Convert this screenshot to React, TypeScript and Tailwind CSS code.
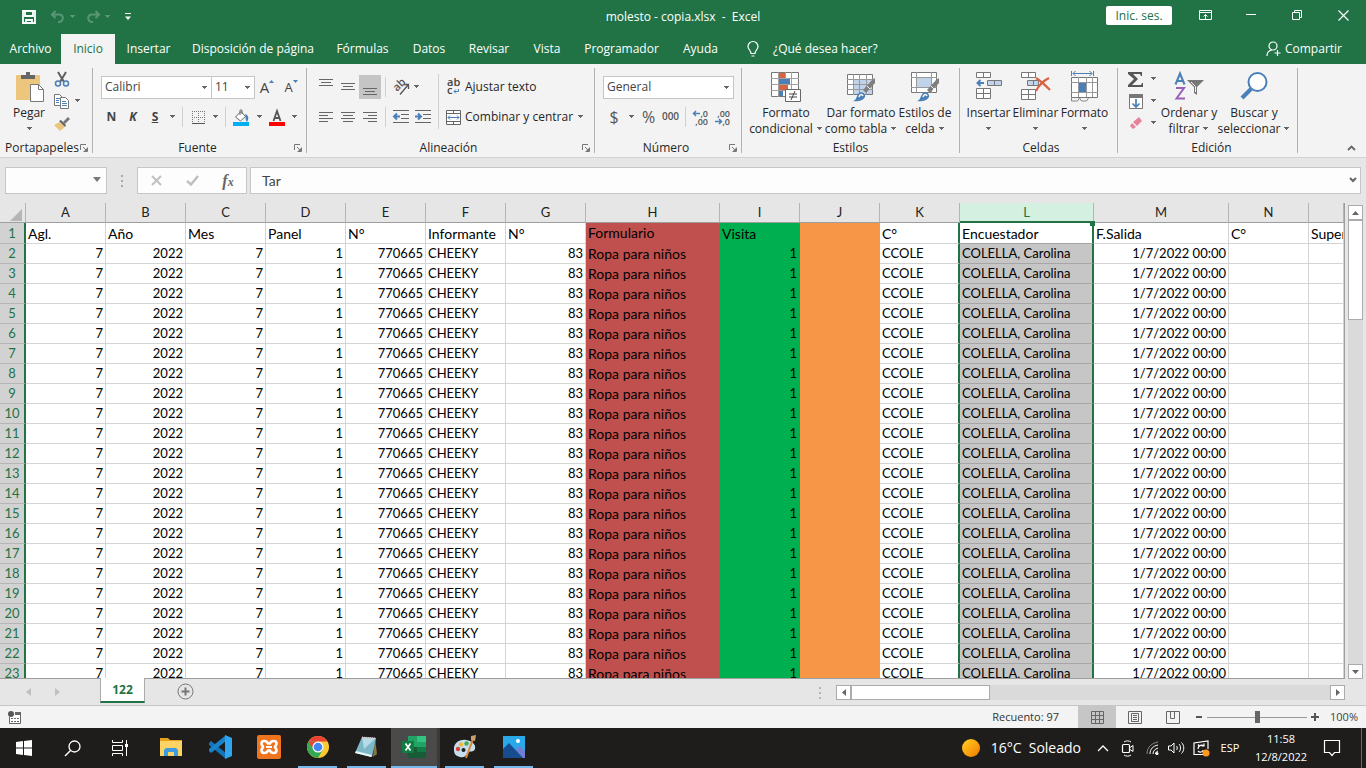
import React from 'react';

interface ChildrenProps {
  children: React.ReactNode;
}

interface DrawingProps extends ChildrenProps {
  w: number;
  h: number;
}

// One viewBox unit is one pixel, so the strokes stay crisp
const Drawing: React.FC<DrawingProps> = ({ w, h, children }) => (
  <svg width={w} height={h} viewBox={`0 0 ${w} ${h}`} fill="none" className="block shrink-0 overflow-visible" aria-hidden="true">
    {children}
  </svg>
);

const Caret: React.FC<{ color?: string }> = ({ color = '#666666' }) => (
  <Drawing w={7} h={4}>
    <path d="M1 0h5v1h-1v1h-1v1h-1v-1h-1v-1h-1z" fill={color} />
  </Drawing>
);

interface ToolProps {
  label: string;
  className: string;
  small?: boolean;
}

const CaretButton: React.FC<ToolProps> = ({ label, className, small }) => (
  <button type="button" aria-label={label} className={`flex items-center justify-center ${small ? 'h-[22px]' : 'h-6'} ${className}`}>
    <Caret />
  </button>
);

const ToolButton: React.FC<ToolProps & ChildrenProps> = ({ label, className, small, children }) => (
  <button
    type="button"
    aria-label={label}
    title={label}
    className={`flex shrink-0 items-center justify-center ${small ? 'h-[22px]' : 'h-6'} ${className}`}
  >
    {children}
  </button>
);

const Divider: React.FC<{ className?: string }> = ({ className = 'mx-1 h-5' }) => (
  <div className={`w-px shrink-0 bg-[#d0d0d0] ${className}`} />
);

const RibbonGroup: React.FC<{ title: string; className: string; launcher?: boolean } & ChildrenProps> = ({
  title,
  className,
  launcher,
  children,
}) => (
  <section aria-label={title} className={`mt-1 flex h-[85px] shrink-0 flex-col border-r border-[#b1b1b1] ${className}`}>
    <div className="flex h-[74px] shrink-0">{children}</div>
    <div className="flex h-3 items-center">
      <span className="flex-1 text-center">{title}</span>
      {launcher && (
        <button type="button" aria-label={`Más opciones de ${title}`} className="mr-1">
          <Drawing w={8} h={8}>
            <path d="M0.5 6V0.5H6M3 3l3 3M7.5 3.500v4h-4" stroke="#777777" />
            <path d="M7 4v3h-3z" fill="#777777" />
          </Drawing>
        </button>
      )}
    </div>
  </section>
);

interface BigButtonProps {
  icon: React.ReactNode;
  lines: [string, string?];
  className: string;
}

const BigButton: React.FC<BigButtonProps> = ({ icon, lines, className }) => (
  <button type="button" className={`flex shrink-0 flex-col items-center pt-1 leading-4 whitespace-nowrap ${className}`}>
    <span className="flex h-[33px] items-start">{icon}</span>
    <span>{lines[0]}</span>
    <span className="flex h-4 items-center gap-[3px]">
      {lines[1]}
      <Caret />
    </span>
  </button>
);

interface ComboProps {
  label: string;
  value: string;
  className: string;
}

const Combo: React.FC<ComboProps> = ({ label, value, className }) => (
  <div className={`relative ${className}`}>
    <select
      aria-label={label}
      defaultValue={value}
      className="block h-[23px] w-full appearance-none border border-[#c6c6c6] bg-white px-[3px] text-[#444444] outline-none"
    >
      <option>{value}</option>
    </select>
    <span className="pointer-events-none absolute top-[10px] right-1">
      <Caret />
    </span>
  </div>
);

// Horizontal strokes of the alignment buttons: [x, y, width]
const LineIcon: React.FC<{ lines: number[][]; h?: number }> = ({ lines, h = 16 }) => (
  <Drawing w={16} h={h}>
    {lines.map(([x, y, width]) => (
      <rect key={y} x={x} y={y} width={width} height={1} fill="#666666" />
    ))}
  </Drawing>
);

const Brush: React.FC = () => (
  <>
    <path d="M28 6v5l-9 10-3-3 9-10z" fill="#7f7f7f" />
    <path d="M20 14l3 3" stroke="#f3f3f3" />
    <path d="M6 29c4-1 3-5 6-8 3-2 7 1 6 4-2 4-8 5-12 4z" fill="#4a7fb8" />
    <path d="M12 25c1-3 3-3 4-1" stroke="#ffffff" strokeWidth="1.500" />
  </>
);

const ClipboardSection: React.FC = () => (
  <RibbonGroup title="Portapapeles" className="w-[93px] pl-1" launcher>
    <BigButton
      className="w-[50px]"
      lines={['Pegar']}
      icon={
        <Drawing w={29} h={31}>
          <rect x="1" y="3" width="24" height="25" rx="1" fill="#ecc67c" />
          <path d="M6 7V3h5V0h4v3h5v4z" fill="#666666" />
          <path d="M15.500 12.500h8l5 5v12h-13z" fill="#ffffff" stroke="#777777" />
          <path d="M23.500 12.500v5h5" stroke="#777777" />
        </Drawing>
      }
    />
    <div className="flex flex-col">
      <ToolButton label="Cortar" className="w-4" small>
        <Drawing w={16} h={16}>
          <path d="M4 1l6 10M12 1L6 11" stroke="#5f5f5f" strokeWidth="2" />
          <circle cx="4" cy="12.500" r="2.500" stroke="#4a7fb8" strokeWidth="1.500" />
          <circle cx="12" cy="12.500" r="2.500" stroke="#4a7fb8" strokeWidth="1.500" />
        </Drawing>
      </ToolButton>
      <div className="flex">
        <ToolButton label="Copiar" className="w-4" small>
          <Drawing w={16} h={15}>
            <path d="M.5.5h5l3 3v8h-8z" fill="#ffffff" stroke="#777777" />
            <path d="M2 4.500h4M2 6.500h3M2 8.500h3" stroke="#4a7fb8" />
            <path d="M6.500 3.500h5l3 3v8h-8z" fill="#ffffff" stroke="#777777" />
            <path d="M8 7.500h4M8 9.500h5M8 11.500h5" stroke="#4a7fb8" />
          </Drawing>
        </ToolButton>
        <CaretButton label="Opciones de copiar" className="w-[14px]" small />
      </div>
      <ToolButton label="Copiar formato" className="w-4" small>
        <Drawing w={16} h={15}>
          <path d="M0 9l6-3 5 5-5 4z" fill="#ecc67c" />
          <path d="M5 5l2-1 5 5-1 2z" fill="#666666" />
          <path d="M9 6l5-5 2 2-5 5z" fill="#777777" />
        </Drawing>
      </ToolButton>
    </div>
  </RibbonGroup>
);

const FontSection: React.FC = () => (
  <RibbonGroup title="Fuente" className="w-[214px] pl-2" launcher>
    <div className="pt-[7px]">
      <div className="flex h-6 items-center">
        <Combo label="Fuente" value="Calibri" className="w-[111px]" />
        <Combo label="Tamaño de fuente" value="11" className="-ml-px w-11" />
        <ToolButton label="Aumentar tamaño" className="w-6">
          <span className="text-[15px] leading-5 text-[#444444]">A</span>
          <span className="-mt-3"><Drawing w={5} h={3}><path d="M0 3l2.500-3 2.500 3z" fill="#4a7fb8" /></Drawing></span>
        </ToolButton>
        <ToolButton label="Disminuir tamaño" className="w-6">
          <span className="text-[13px] leading-5 text-[#444444]">A</span>
          <span className="-mt-3"><Drawing w={5} h={3}><path d="M0 0l2.500 3 2.500-3z" fill="#4a7fb8" /></Drawing></span>
        </ToolButton>
      </div>
      <div className="mt-[6px] flex items-center text-[#444444]">
        <ToolButton label="Negrita" className="w-[21px]"><b>N</b></ToolButton>
        <ToolButton label="Cursiva" className="w-[22px]"><b className="italic">K</b></ToolButton>
        <ToolButton label="Subrayado" className="w-[22px]"><b className="underline">S</b></ToolButton>
        <CaretButton label="Opciones de subrayado" className="w-3" />
        <Divider />
        <ToolButton label="Bordes" className="w-[22px]">
          <Drawing w={13} h={13}>
            <path d="M.5 0v12M6.500 0v12M12.500 0v12M0 .5h13M0 6.500h13" stroke="#777777" strokeDasharray="1 1" />
            <path d="M0 12.500h13" stroke="#555555" />
          </Drawing>
        </ToolButton>
        <CaretButton label="Opciones de bordes" className="w-3" />
        <Divider />
        <ToolButton label="Color de relleno" className="w-[23px]">
          <Drawing w={17} h={17}>
            <path d="M2.500 8L8 2.500l4.500 5L7.500 12z" fill="#ffffff" stroke="#666666" />
            <path d="M7 6V1.500c0-1 2-1 2 0V5" stroke="#666666" />
            <path d="M12 5c4 1 4 5 2 8-2-2-1-5-2-8z" fill="#4a7fb8" />
            <rect y="13" width="16" height="4" fill="#00b0f0" />
          </Drawing>
        </ToolButton>
        <CaretButton label="Opciones de relleno" className="w-3" />
        <ToolButton label="Color de fuente" className="w-[23px]">
          <Drawing w={16} h={17}>
            <path d="M4.500 12L8 2l3.500 10M6 9h4.500" stroke="#555555" strokeWidth="1.800" />
            <rect y="13" width="16" height="4" fill="#ff0000" />
          </Drawing>
        </ToolButton>
        <CaretButton label="Opciones de color" className="w-3" />
      </div>
    </div>
  </RibbonGroup>
);

const IndentArrow: React.FC<{ right?: boolean }> = ({ right }) => (
  <Drawing w={16} h={14}>
    <path d="M0 .5h16M8 4.500h8M8 8.500h8M0 12.500h16" stroke="#666666" />
    <path d={right ? 'M0 6.500h5M3 3.500l3 3-3 3' : 'M7 6.500H2M4 3.500l-3 3 3 3'} stroke="#4a7fb8" strokeWidth="2" />
  </Drawing>
);

const AlignmentSection: React.FC = () => (
  <RibbonGroup title="Alineación" className="w-[288px] pl-2" launcher>
    <div className="pt-[7px]">
      <div className="flex h-6 items-center">
        <ToolButton label="Alinear en la parte superior" className="w-[22px]">
          <LineIcon lines={[[1, 0, 14], [3, 3, 10], [1, 6, 14]]} />
        </ToolButton>
        <ToolButton label="Alinear en el medio" className="w-[22px]">
          <LineIcon lines={[[1, 4, 14], [3, 7, 10], [1, 10, 14]]} />
        </ToolButton>
        <ToolButton label="Alinear en la parte inferior" className="w-[22px] bg-[#c5c5c5]">
          <LineIcon lines={[[1, 9, 14], [3, 12, 10], [1, 15, 14]]} />
        </ToolButton>
        <Divider />
        <ToolButton label="Orientación" className="w-[22px]">
          <Drawing w={17} h={17}>
            <text x="1" y="10" fontSize="11" fontWeight="600" fill="#555555" transform="rotate(-45 6 8)">ab</text>
            <path d="M7 15.500L15 6M11 5.500h4.500V10" stroke="#555555" strokeWidth="1.300" />
          </Drawing>
        </ToolButton>
        <CaretButton label="Opciones de orientación" className="w-2" />
      </div>
      <div className="mt-[6px] flex items-center">
        <ToolButton label="Alinear a la izquierda" className="w-[22px]">
          <LineIcon lines={[[1, 3, 14], [1, 6, 9], [1, 9, 14], [1, 12, 9]]} />
        </ToolButton>
        <ToolButton label="Centrar" className="w-[22px]">
          <LineIcon lines={[[1, 3, 14], [3, 6, 10], [1, 9, 14], [3, 12, 10]]} />
        </ToolButton>
        <ToolButton label="Alinear a la derecha" className="w-[22px]">
          <LineIcon lines={[[1, 3, 14], [6, 6, 9], [1, 9, 14], [6, 12, 9]]} />
        </ToolButton>
        <Divider />
        <ToolButton label="Disminuir sangría" className="w-[22px]"><IndentArrow /></ToolButton>
        <ToolButton label="Aumentar sangría" className="w-[22px]"><IndentArrow right /></ToolButton>
      </div>
    </div>
    <Divider className="mt-[6px] ml-1 h-[55px]" />
    <div className="pt-[7px] pl-[7px]">
      <button type="button" className="flex h-6 items-center gap-1 whitespace-nowrap">
        <Drawing w={15} h={16}>
          <text x="1" y="7" fontSize="11" fontWeight="600" fill="#444444">ab</text>
          <text x="1" y="15" fontSize="11" fontWeight="600" fill="#444444">c</text>
          <path d="M12.500 10v2.500H8M10 10.500l-2 2 2 2" stroke="#4a7fb8" />
        </Drawing>
        Ajustar texto
      </button>
      <div className="mt-[6px] flex">
        <button type="button" className="flex h-6 w-[126px] items-center gap-1 whitespace-nowrap">
          <Drawing w={15} h={15}>
            <path d="M.5.5h14v14H.5zM.5 3.500h14M.5 11.500h14M7.500 0v3M7.500 12v3" fill="#ffffff" stroke="#666666" />
            <path d="M2 7.500h11M4 5.500l-2 2 2 2M11 5.500l2 2-2 2" stroke="#4a7fb8" />
          </Drawing>
          Combinar y centrar
        </button>
        <CaretButton label="Opciones de combinar" className="w-4" />
      </div>
    </div>
  </RibbonGroup>
);

const DecimalIcon: React.FC<{ less?: boolean }> = ({ less }) => (
  <Drawing w={16} h={15}>
    <text x="15" y="7" fontSize="9" fontWeight="600" textAnchor="end" fill="#555555">{less ? ',00' : ',0'}</text>
    <text x="15" y="15" fontSize="9" fontWeight="600" textAnchor="end" fill="#555555">{less ? ',0' : ',00'}</text>
    <path
      d={less ? 'M0 11.500h6M4 9l2.500 2.500L4 14' : 'M7 3.500H1M3 1L.5 3.500 3 6'}
      stroke="#4a7fb8"
      strokeWidth="1.500"
    />
  </Drawing>
);

const NumberSection: React.FC = () => (
  <RibbonGroup title="Número" className="w-[147px] pl-2" launcher>
    <div className="pt-[7px]">
      <div className="flex h-6 items-center">
        <Combo label="Formato de número" value="General" className="w-[131px]" />
      </div>
      <div className="mt-[6px] flex items-center text-[#555555]">
        <ToolButton label="Formato de moneda" className="w-[22px]"><span className="text-base">$</span></ToolButton>
        <CaretButton label="Opciones de moneda" className="w-3" />
        <ToolButton label="Porcentaje" className="w-[23px]"><span className="text-base">%</span></ToolButton>
        <ToolButton label="Estilo millares" className="w-[21px]"><span className="text-[10px] font-semibold">000</span></ToolButton>
        <Divider />
        <ToolButton label="Aumentar decimales" className="w-[22px]"><DecimalIcon /></ToolButton>
        <ToolButton label="Disminuir decimales" className="w-[22px]"><DecimalIcon less /></ToolButton>
      </div>
    </div>
  </RibbonGroup>
);

const StylesSection: React.FC = () => (
  <RibbonGroup title="Estilos" className="w-[218px]">
    <BigButton
      className="w-[88px]"
      lines={['Formato', 'condicional']}
      icon={
        <Drawing w={30} h={30}>
          <path d="M.5.5h27v24H.5z" fill="#ffffff" stroke="#777777" />
          <path d="M7.500 0v25M14.500 0v25M20.500 0v25M0 6.500h28M0 12.500h28M0 18.500h28" stroke="#a0a0a0" />
          <path d="M8 1h6v5H8zM8 13h9v5H8z" fill="#d8633f" />
          <path d="M8 7h11v5H8zM8 19h4v5H8z" fill="#4a7fb8" />
          <path d="M14.500 17.500h15v12h-15z" fill="#ffffff" stroke="#666666" />
          <path d="M18 22h8M18 25h8M24 19l-4 9" stroke="#444444" />
        </Drawing>
      }
    />
    <BigButton
      className="w-[62px]"
      lines={['Dar formato', 'como tabla']}
      icon={
        <Drawing w={29} h={31}>
          <path d="M.5 2.500h25v20H.5z" fill="#ffffff" stroke="#777777" />
          <path d="M7 8h18v14H7z" fill="#c0d3e8" />
          <path d="M6.500 2v21M12.500 2v21M19.500 2v21M0 7.500h26M0 12.500h26M0 17.500h26" stroke="#999999" />
          <Brush />
        </Drawing>
      }
    />
    <BigButton
      className="w-[66px]"
      lines={['Estilos de', 'celda']}
      icon={
        <Drawing w={29} h={31}>
          <path d="M.5.5h25v20H.5z" fill="#ffffff" stroke="#777777" />
          <path d="M6 6h14v9H6z" fill="#c0d3e8" />
          <path d="M5.500 0v21M20.500 0v21M0 5.500h26M0 15.500h26" stroke="#999999" />
          <Brush />
        </Drawing>
      }
    />
  </RibbonGroup>
);

const CellsSection: React.FC = () => (
  <RibbonGroup title="Celdas" className="w-[158px] pl-[5px]">
    <BigButton
      className="w-[47px]"
      lines={['Insertar']}
      icon={
        <Drawing w={26} h={28}>
          <path d="M.5.5h14v5H.5zM7.500 0v5M.5 16.500h14v10H.5zM7.500 17v10M0 21.500h15" fill="#ffffff" stroke="#777777" />
          <path d="M11.500 8.500h14v5h-14zM18.500 9v5" fill="#c0d3e8" stroke="#777777" />
          <path d="M8 11H2M4.500 8l-3 3 3 3" stroke="#4a7fb8" strokeWidth="2" />
        </Drawing>
      }
    />
    <BigButton
      className="w-[47px]"
      lines={['Eliminar']}
      icon={
        <Drawing w={30} h={29}>
          <path d="M.5.5h14v5H.5zM7.500 0v5M.5 17.500h14v10H.5zM7.500 18v10M0 22.500h15" fill="#ffffff" stroke="#777777" />
          <path d="M6.500 8.500h11v5h-11zM12.500 9v5" fill="#c0d3e8" stroke="#777777" />
          <path d="M15 6c5 3 9 7 14 12M28 6c-6 3-10 7-13 13" stroke="#d8633f" strokeWidth="2.200" />
        </Drawing>
      }
    />
    <BigButton
      className="w-[51px]"
      lines={['Formato']}
      icon={
        <Drawing w={29} h={31}>
          <path d="M1.500-1v5M23.500-1v5M3 1.500h19M5.500-1L3 1.500 5.500 4M19.500-1L22 1.500 19.500 4" stroke="#4a7fb8" />
          <path d="M1.500 5.500h26v20h-26z" fill="#ffffff" stroke="#777777" />
          <path d="M8.500 5v20M16.500 5v20M22.500 5v20M1 10.500h27M1 20.500h27" stroke="#999999" />
          <path d="M9 11h7v9H9z" fill="#4a7fb8" />
          <path d="M1.500 25v4h6l2-3 2 3h5l2-3" stroke="#888888" />
        </Drawing>
      }
    />
  </RibbonGroup>
);

const EditingSection: React.FC = () => (
  <RibbonGroup title="Edición" className="w-[180px] pl-2">
    <div className="flex w-8 flex-col">
      <div className="flex">
        <ToolButton label="Autosuma" className="w-5" small>
          <Drawing w={16} h={15}>
            <path d="M0 0h14v4h-1l-1-2H5l5 5-6 6h9l1-2h1v4H0v-2l6-6-6-5z" fill="#555555" />
          </Drawing>
        </ToolButton>
        <CaretButton label="Opciones de autosuma" className="ml-[2px] w-[10px]" small />
      </div>
      <div className="flex">
        <ToolButton label="Rellenar" className="w-5" small>
          <Drawing w={14} h={15}>
            <path d="M.5.5h13v14H.5z" fill="#ffffff" stroke="#777777" />
            <path d="M0 0h14v4H0z" fill="#777777" />
            <path d="M7 5v8M3.500 9.500L7 13l3.500-3.500" stroke="#4a7fb8" strokeWidth="1.700" />
          </Drawing>
        </ToolButton>
        <CaretButton label="Opciones de rellenar" className="ml-[2px] w-[10px]" small />
      </div>
      <div className="flex">
        <ToolButton label="Borrar" className="w-5" small>
          <Drawing w={14} h={14}>
            <path d="M4 6l6-5 3 4-5 5z" fill="#e8829a" />
            <path d="M3 7l4 4-3 2-3-3z" fill="#e8829a" />
          </Drawing>
        </ToolButton>
        <CaretButton label="Opciones de borrar" className="ml-[2px] w-[10px]" small />
      </div>
    </div>
    <BigButton
      className="w-[62px]"
      lines={['Ordenar y', 'filtrar']}
      icon={
        <Drawing w={30} h={29}>
          <path d="M1.500 12.500L6 1.500l4.500 11M3 9h6" stroke="#4a7fb8" strokeWidth="2" />
          <path d="M2 16h8L2.500 26.500H11" stroke="#9a5fb8" strokeWidth="2" />
          <path d="M13 8h17l-7 7v8l-3-2v-6z" fill="#777777" />
          <path d="M17 10l4.500 4.500V20" stroke="#f3f3f3" />
        </Drawing>
      }
    />
    <BigButton
      className="w-[68px]"
      lines={['Buscar y', 'seleccionar']}
      icon={
        <Drawing w={28} h={28}>
          <path d="M11 17L2 26" stroke="#4a7fb8" strokeWidth="4" />
          <circle cx="17.500" cy="10" r="9" fill="#ffffff" stroke="#4a7fb8" strokeWidth="2" />
        </Drawing>
      }
    />
  </RibbonGroup>
);

const TitleBar: React.FC = () => (
  <div className="grid h-[34px] grid-cols-[1fr_auto_1fr] items-center">
    <div className="flex items-center pl-[22px]">
      <button type="button" aria-label="Guardar">
        <Drawing w={14} h={14}>
          <path d="M1 1h12v12H1zM3 2v4h8V2M4 13v-3h6v3" stroke="#ffffff" strokeWidth="1.800" />
        </Drawing>
      </button>
      <button type="button" aria-label="Deshacer" className="ml-[14px]">
        <Drawing w={16} h={14}>
          <path d="M5.500 1L2 4.500 5.500 8M2 4.500h7c5 0 5 7 0 7.500H8" stroke="#5a9675" strokeWidth="2" />
        </Drawing>
      </button>
      <span className="ml-[3px]"><Caret color="#5a9675" /></span>
      <button type="button" aria-label="Rehacer" className="ml-[9px]">
        <Drawing w={16} h={14}>
          <path d="M10.500 1L14 4.500 10.500 8M14 4.500H7c-5 0-5 7 0 7.500h1" stroke="#5a9675" strokeWidth="2" />
        </Drawing>
      </button>
      <span className="ml-[3px]"><Caret color="#5a9675" /></span>
      <button type="button" aria-label="Personalizar barra de acceso rápido" className="ml-[13px]">
        <Drawing w={7} h={8}>
          <path d="M1 .5h6" stroke="#ffffff" />
          <path d="M1 3.500h6L4 7z" fill="#ffffff" />
        </Drawing>
      </button>
    </div>
    <h1 className="whitespace-pre">molesto - copia.xlsx  -  Excel</h1>
    <div className="flex h-full items-center justify-end text-white">
      <button type="button" className="-mt-1 mr-[10px] h-[19px] w-[66px] rounded-xs bg-white leading-[19px] text-[#217346]">
        Inic. ses.
      </button>
      <button type="button" aria-label="Opciones de la cinta" className="-mt-1 flex h-[30px] w-[46px] items-center justify-center">
        <Drawing w={13} h={10}>
          <path d="M.5.5h12v9H.5zM.5 2.500h12M6.500 9V4.500M4.500 6.500l2-2 2 2" stroke="#ffffff" />
        </Drawing>
      </button>
      <button type="button" aria-label="Minimizar" className="-mt-1 flex h-[30px] w-[46px] items-center justify-center">
        <Drawing w={10} h={2}><path d="M0 .5h10" stroke="#ffffff" /></Drawing>
      </button>
      <button type="button" aria-label="Restaurar" className="-mt-1 flex h-[30px] w-[46px] items-center justify-center">
        <Drawing w={10} h={10}><path d="M.5 2.500h7v7h-7zM2.500 2V.5h7v7H8" stroke="#ffffff" /></Drawing>
      </button>
      <button type="button" aria-label="Cerrar" className="-mt-1 flex h-[30px] w-[46px] items-center justify-center">
        <Drawing w={11} h={11}><path d="M.5.5l10 10M10.500.5l-10 10" stroke="#ffffff" strokeWidth="1.200" /></Drawing>
      </button>
    </div>
  </div>
);

const ribbonTabs = [
  { name: 'Archivo', width: 'w-[61px]' },
  { name: 'Inicio', width: 'w-[54px]' },
  { name: 'Insertar', width: 'w-[67px]' },
  { name: 'Disposición de página', width: 'w-[142px]' },
  { name: 'Fórmulas', width: 'w-[77px]' },
  { name: 'Datos', width: 'w-[56px]' },
  { name: 'Revisar', width: 'w-[64px]' },
  { name: 'Vista', width: 'w-[52px]' },
  { name: 'Programador', width: 'w-[97px]' },
  { name: 'Ayuda', width: 'w-[61px]' },
];

const TabBar: React.FC = () => (
  <nav className="flex h-[30px] items-center whitespace-nowrap">
    {ribbonTabs.map(({ name, width }) => (
      <button
        key={name}
        type="button"
        className={`h-full shrink-0 ${width} ${name === 'Inicio' ? 'bg-[#f3f3f3] text-[#217346]' : 'text-white'}`}
      >
        {name}
      </button>
    ))}
    <button type="button" className="ml-4 flex items-center gap-[14px]">
      <Drawing w={12} h={16}>
        <path d="M4 12.500c0-3-3-4-3-7a5 5 0 0 1 10 0c0 3-3 4-3 7zM4 12.500h4M4.500 15h3" stroke="#ffffff" strokeWidth="1.200" />
      </Drawing>
      ¿Qué desea hacer?
    </button>
    <button type="button" className="mr-6 ml-auto flex items-center gap-1">
      <Drawing w={15} h={16}>
        <circle cx="7" cy="5" r="4" stroke="#ffffff" strokeWidth="1.200" />
        <path d="M1 15c0-4 2-5.500 5-6M11.500 9v6M8.500 12h6" stroke="#ffffff" strokeWidth="1.200" />
      </Drawing>
      Compartir
    </button>
  </nav>
);

const FormulaBar: React.FC = () => (
  <div className="flex h-[46px] shrink-0 items-start border-t border-[#d2d2d2] px-[5px] pt-[9px]">
    <div className="relative w-[102px] shrink-0">
      <input aria-label="Cuadro de nombres" className="block h-[27px] w-full border border-[#c6c6c6] bg-[#fdfdfd]" />
      <span className="pointer-events-none absolute top-[10px] right-[6px]">
        <Drawing w={8} h={5}><path d="M0 0h8L4 5z" fill="#777777" /></Drawing>
      </span>
    </div>
    <div className="flex h-[27px] w-[30px] shrink-0 items-center justify-center">
      <Drawing w={2} h={12}><path d="M0 0h2v2H0zM0 5h2v2H0zM0 10h2v2H0z" fill="#a8a8a8" /></Drawing>
    </div>
    <div className="flex h-[27px] w-[110px] shrink-0 items-center border border-[#c6c6c6] bg-[#fdfdfd]">
      <button type="button" aria-label="Cancelar" className="flex w-9 justify-center">
        <Drawing w={11} h={11}><path d="M1 1l9 9M10 1l-9 9" stroke="#c0c0c0" strokeWidth="2" /></Drawing>
      </button>
      <button type="button" aria-label="Introducir" className="flex w-9 justify-center">
        <Drawing w={13} h={11}><path d="M1 6l4 3.500L12 1" stroke="#c0c0c0" strokeWidth="2.500" /></Drawing>
      </button>
      <button type="button" aria-label="Insertar función" className="w-9 font-['Liberation_Serif',serif] text-base leading-5 font-bold text-[#666666] italic">
        f<span className="text-xs">x</span>
      </button>
    </div>
    <div className="relative ml-[3px] flex-1">
      <input
        aria-label="Barra de fórmulas"
        defaultValue="Tar"
        className="block h-[27px] w-full border border-[#c6c6c6] bg-[#fdfdfd] px-[11px] font-[Lato,sans-serif] text-sm text-[#444444] outline-none"
      />
      <button type="button" aria-label="Expandir barra de fórmulas" className="absolute top-[10px] right-1">
        <Drawing w={8} h={6}><path d="M1 1l3 3 3-3" stroke="#666666" strokeWidth="2" /></Drawing>
      </button>
    </div>
  </div>
);

interface Column {
  letter: string;
  width: string;
  title: string;
  value: string;
  body: string;
}

const plain = 'text-[13px] border-[#d4d4d4]';
const number = `text-right ${plain}`;
const green = 'text-[13px] border-r-2 border-b-[#d4d4d4] border-r-[#217346]';

const columns: Column[] = [
  { letter: 'A', width: 'w-20', title: 'Agl.', value: '7', body: number },
  { letter: 'B', width: 'w-20', title: 'Año', value: '2022', body: number },
  { letter: 'C', width: 'w-20', title: 'Mes', value: '7', body: number },
  { letter: 'D', width: 'w-20', title: 'Panel', value: '1', body: number },
  { letter: 'E', width: 'w-20', title: 'N°', value: '770665', body: number },
  { letter: 'F', width: 'w-20', title: 'Informante', value: 'CHEEKY', body: plain },
  { letter: 'G', width: 'w-20', title: 'N°', value: '83', body: number },
  { letter: 'H', width: 'w-[134px]', title: 'Formulario', value: 'Ropa para niños', body: 'text-sm bg-[#c0504d] border-[#c0504d]' },
  { letter: 'I', width: 'w-20', title: 'Visita', value: '1', body: 'text-right text-[13px] bg-[#00b050] border-[#00b050]' },
  { letter: 'J', width: 'w-20', title: '', value: '', body: 'bg-[#f79646] border-[#f79646]' },
  { letter: 'K', width: 'w-20', title: 'C°', value: 'CCOLE', body: green },
  { letter: 'L', width: 'w-[134px]', title: 'Encuestador', value: 'COLELLA, Carolina', body: 'text-[13px] bg-[#c6c6c6] border-r-2 border-r-[#217346] border-b-[#a6a6a6]' },
  { letter: 'M', width: 'w-[135px]', title: 'F.Salida', value: '1/7/2022 00:00', body: number },
  { letter: 'N', width: 'w-20', title: 'C°', value: '', body: plain },
  { letter: 'O', width: '', title: 'Supervisor', value: '', body: plain },
];

const titleCell = (column: Column): string => {
  const base = column.body.replace('text-right', '').replace('text-[13px]', '');
  return column.letter === 'L' ? 'bg-white border-r-2 border-r-[#217346] border-b-[#a6a6a6]' : base;
};

const dataRows = Array.from({ length: 22 }, (_, index) => index + 2);

const rowHeader = 'h-5 border-r-2 border-b border-r-[#217346] border-b-[#b5b5b5] bg-[#d2d2d2] p-0 text-center text-[13px] font-normal text-[#217346]';

const Sheet: React.FC = () => (
  <div className="min-w-0 flex-1 overflow-hidden border-r border-b border-[#9e9e9e] bg-white">
    <table className="w-full table-fixed border-separate border-spacing-0 font-[Lato,sans-serif] text-sm leading-[19px] text-black">
      <colgroup>
        <col className="w-[26px]" />
        {columns.map(({ letter, width }) => <col key={letter} className={width} />)}
      </colgroup>
      <thead>
        <tr>
          <th aria-label="Seleccionar todo" className="h-5 border-r border-b border-r-[#b5b5b5] border-b-[#9e9e9e] bg-[#e6e6e6] p-0">
            <div className="flex justify-end pt-1 pr-[3px]">
              <Drawing w={12} h={12}><path d="M12 0v12H0z" fill="#b5b5b5" /></Drawing>
            </div>
          </th>
          {columns.map(({ letter }) => (
            <th
              key={letter}
              className={`h-5 border-r p-0 text-center text-[13px] font-normal ${
                letter === 'L'
                  ? 'relative border-b-2 border-r-[#b5b5b5] border-b-[#217346] bg-[#d3f0e0] leading-[18px] text-[#217346]'
                  : 'border-b border-r-[#b5b5b5] border-b-[#9e9e9e] bg-[#e6e6e6] text-[#222222]'
              }`}
            >
              {letter === 'O' ? '' : letter}
              {letter === 'L' && <span className="absolute -right-[2px] -bottom-[5px] h-[5px] w-[5px] bg-[#217346]" />}
            </th>
          ))}
        </tr>
      </thead>
      <tbody>
        <tr>
          <th className={rowHeader}>1</th>
          {columns.map(column => (
            <td key={column.letter} className={`h-5 overflow-hidden border-r border-b px-[2px] py-0 whitespace-nowrap ${titleCell(column)}`}>
              {column.title}
            </td>
          ))}
        </tr>
        {dataRows.map(row => (
          <tr key={row}>
            <th className={rowHeader}>{row}</th>
            {columns.map(({ letter, value, body }) => (
              <td key={letter} className={`h-5 border-r border-b px-[2px] py-0 leading-[19px] whitespace-nowrap ${body}`}>{value}</td>
            ))}
          </tr>
        ))}
      </tbody>
    </table>
  </div>
);

const scrollButton = 'flex h-[15px] w-[15px] shrink-0 items-center justify-center border border-[#ababab] bg-white';

const VerticalScroll: React.FC = () => (
  <div className="mx-[3px] flex w-[15px] shrink-0 flex-col pt-[2px]">
    <button type="button" aria-label="Desplazar arriba" className={scrollButton}>
      <Drawing w={7} h={4}><path d="M0 4L3.500 0 7 4z" fill="#666666" /></Drawing>
    </button>
    <div className="flex-1 bg-[#dadada]">
      <div className="h-[100px] border border-[#ababab] bg-white" />
    </div>
    <button type="button" aria-label="Desplazar abajo" className={scrollButton}>
      <Drawing w={7} h={4}><path d="M0 0l3.500 4L7 0z" fill="#666666" /></Drawing>
    </button>
  </div>
);

const SheetTabs: React.FC = () => (
  <div className="flex h-[27px] shrink-0 items-start border-b border-[#c6c6c6]">
    <div className="flex h-[26px] w-[100px] items-center gap-6 pl-[26px]">
      <button type="button" aria-label="Hoja anterior"><Drawing w={5} h={8}><path d="M5 0v8L0 4z" fill="#c0c0c0" /></Drawing></button>
      <button type="button" aria-label="Hoja siguiente"><Drawing w={5} h={8}><path d="M0 0v8l5-4z" fill="#c0c0c0" /></Drawing></button>
    </div>
    <button type="button" className="-mt-px h-[25px] w-[45px] border-x border-b-2 border-x-[#ababab] border-b-[#217346] bg-white text-xs font-bold text-[#217346]">
      122
    </button>
    <button type="button" aria-label="Hoja nueva" className="mt-1 ml-8">
      <Drawing w={17} h={17}>
        <circle cx="8.500" cy="8.500" r="7.500" stroke="#777777" />
        <path d="M4.500 8.500h8M8.500 4.500v8" stroke="#777777" strokeWidth="2" />
      </Drawing>
    </button>
    <div className="mt-[6px] mr-[21px] ml-auto flex w-[526px] items-center">
      <Drawing w={2} h={12}><path d="M0 0h2v2H0zM0 5h2v2H0zM0 10h2v2H0z" fill="#b5b5b5" /></Drawing>
      <button type="button" aria-label="Desplazar a la izquierda" className={`ml-[15px] ${scrollButton}`}>
        <Drawing w={4} h={7}><path d="M4 0v7L0 3.500z" fill="#666666" /></Drawing>
      </button>
      <div className="flex h-[15px] flex-1 bg-[#dadada]">
        <div className="w-[139px] border border-[#ababab] bg-white" />
      </div>
      <button type="button" aria-label="Desplazar a la derecha" className={scrollButton}>
        <Drawing w={4} h={7}><path d="M0 0v7l4-3.500z" fill="#666666" /></Drawing>
      </button>
    </div>
  </div>
);

const StatusBar: React.FC = () => (
  <div className="flex h-[22px] shrink-0 items-center bg-[#f3f3f3] pr-2 text-[11px] text-[#444444]">
    <button type="button" aria-label="Grabar macro" className="ml-2">
      <Drawing w={14} h={13}>
        <path d="M1.500 6v6.500h11V2.500H7" fill="#ffffff" stroke="#666666" />
        <path d="M7 1h6v3H7z" fill="#666666" />
        <path d="M3 7.500h8M3 10.500h8" stroke="#666666" strokeDasharray="2 1" />
        <circle cx="3" cy="3" r="3" fill="#555555" />
      </Drawing>
    </button>
    <span className="mr-[19px] ml-auto text-[#333333]">Recuento: 97</span>
    <button type="button" aria-label="Normal" className="flex h-full w-[38px] items-center justify-center bg-[#c6c6c6]">
      <Drawing w={13} h={13}><path d="M.5.5h12v12H.5zM4.500 0v13M8.500 0v13M0 4.500h13M0 8.500h13" stroke="#666666" /></Drawing>
    </button>
    <button type="button" aria-label="Diseño de página" className="flex h-full w-[38px] items-center justify-center">
      <Drawing w={14} h={13}><path d="M.5.5h13v12H.5zM3.500 2.500h7v8h-7zM5 4.500h4M5 6.500h4M5 8.500h4" stroke="#666666" /></Drawing>
    </button>
    <button type="button" aria-label="Vista previa de salto de página" className="flex h-full w-[38px] items-center justify-center">
      <Drawing w={14} h={13}><path d="M.5.5h13v12H.5zM4.500 0v7.500M8.500 0v7.500M4.500 7.500h4" stroke="#666666" /></Drawing>
    </button>
    <button type="button" aria-label="Alejar" className="ml-1"><Drawing w={7} h={2}><path d="M0 1h6" stroke="#555555" strokeWidth="2" /></Drawing></button>
    <input
      type="range"
      aria-label="Zoom"
      defaultValue={50}
      className="mx-1 h-px w-[100px] appearance-none bg-[#999999] [&::-webkit-slider-thumb]:h-3 [&::-webkit-slider-thumb]:w-[5px] [&::-webkit-slider-thumb]:appearance-none [&::-webkit-slider-thumb]:bg-[#666666]"
    />
    <button type="button" aria-label="Acercar"><Drawing w={8} h={8}><path d="M0 4h8M4 0v8" stroke="#555555" strokeWidth="2" /></Drawing></button>
    <span className="w-[39px] text-right">100%</span>
  </div>
);

interface TaskButtonProps extends ChildrenProps {
  label: string;
  open?: boolean;
  active?: boolean;
}

const TaskButton: React.FC<TaskButtonProps> = ({ label, open, active, children }) => (
  <button
    type="button"
    aria-label={label}
    className={`flex h-full w-[49px] shrink-0 flex-col items-center ${active ? 'border-r-[3px] border-[#3a3a3a] bg-[#4a4a4a]' : 'px-[5px]'}`}
  >
    <span className="flex flex-1 items-center">{children}</span>
    <span className={`h-[2px] w-full ${open || active ? 'bg-[#76b9ed]' : ''}`} />
  </button>
);

const Taskbar: React.FC = () => (
  <footer className="flex h-10 shrink-0 items-center bg-[#1e1d1c] text-white">
    <button type="button" aria-label="Inicio de Windows" className="flex w-12 justify-center">
      <Drawing w={16} h={16}><path d="M0 2l7-1v6.500H0zM8 1l8-1v7.500H8zM0 8.500h7V15l-7-1zM8 8.500h8V16l-8-1z" fill="#ffffff" /></Drawing>
    </button>
    <button type="button" aria-label="Buscar" className="flex w-12 justify-center">
      <Drawing w={17} h={17}>
        <circle cx="10.500" cy="6.500" r="5.500" stroke="#ffffff" strokeWidth="1.300" />
        <path d="M6.500 10.500L1 16" stroke="#ffffff" strokeWidth="1.500" />
      </Drawing>
    </button>
    <button type="button" aria-label="Vista de tareas" className="mr-[2px] flex w-12 justify-center">
      <Drawing w={16} h={16}>
        <path d="M.5 0v2.500h10V0M.5 16v-2.500h10V16M.5 5.500h10v5H.5zM14.500 0v16" stroke="#ffffff" />
        <path d="M13 4h3v3h-3z" fill="#ffffff" />
      </Drawing>
    </button>
    <TaskButton label="Explorador de archivos">
      <Drawing w={22} h={18}>
        <path d="M0 0h8l2 2h12v16H0z" fill="#e6a21a" />
        <path d="M0 3h22v15H0z" fill="#fdd365" />
        <path d="M4 18v-6l2-2h10l2 2v6h-4v-4H8v4z" fill="#3f9be0" />
      </Drawing>
    </TaskButton>
    <TaskButton label="Visual Studio Code">
      <Drawing w={24} h={24}>
        <path d="M1 8l2-2 15 12v6L1 10z" fill="#1173b8" />
        <path d="M1 16l2 2L18 6V0L1 14z" fill="#1b82cc" />
        <path d="M17 0l7 3v18l-7 3z" fill="#2fa6f2" />
      </Drawing>
    </TaskButton>
    <TaskButton label="XAMPP">
      <Drawing w={24} h={24}>
        <rect width="24" height="24" rx="2" fill="#f0731f" />
        <path
          d="M12 8.500h-1C9.500 5 4.500 5.500 4.500 8.500c0 2 1.500 2.500 1.500 3.500s-1.500 1.500-1.500 3.500c0 3 5 3.500 6.500 0h2c1.500 3.500 6.500 3 6.500 0 0-2-1.500-2.500-1.500-3.500s1.500-1.500 1.500-3.500c0-3-5-3.500-6.500 0z"
          stroke="#ffffff"
          strokeWidth="2.600"
        />
        <path d="M9 12h6" stroke="#ffffff" strokeWidth="2" />
      </Drawing>
    </TaskButton>
    <TaskButton label="Google Chrome" open>
      <Drawing w={22} h={22}>
        <circle cx="11" cy="11" r="11" fill="#fcc934" />
        <path d="M1.500 5.500A11 11 0 0 1 20.500 5.500H11z" fill="#ea4335" />
        <path d="M1.500 5.500A11 11 0 0 0 11 22l4.800-8.200L6.200 13.800z" fill="#34a853" />
        <path d="M1.500 5.500L6.200 13.800 11 11V5.500z" fill="#34a853" />
        <path d="M1.500 5.500h9.500V11H4.600z" fill="#ea4335" />
        <circle cx="11" cy="11" r="5.500" fill="#ffffff" />
        <circle cx="11" cy="11" r="4.300" fill="#4285f4" />
      </Drawing>
    </TaskButton>
    <TaskButton label="Bloc de notas" open>
      <Drawing w={23} h={22}>
        <path d="M20 2l2 16-4 3z" fill="#8a7346" />
        <path d="M7 1l14 1-4 19-17-4z" fill="#7cb8c8" />
        <path d="M7 1l14 1-12 11z" fill="#b5dbe5" />
        <path d="M0 17l16 4 1-2-16-4z" fill="#e8f4f6" />
        <path d="M7 1.500l13 1" stroke="#c9c9c9" strokeDasharray="1 1" strokeWidth="2" />
      </Drawing>
    </TaskButton>
    <TaskButton label="Excel" active>
      <Drawing w={24} h={22}>
        <path d="M6 0h9v11H6z" fill="#21a366" />
        <path d="M15 0h9v6h-9z" fill="#33c481" />
        <path d="M15 6h9v5h-9z" fill="#21a366" />
        <path d="M6 11h9v5H6z" fill="#185c37" />
        <path d="M15 11h9v5h-9z" fill="#107c41" />
        <path d="M6 16h18v6H6z" fill="#185c37" />
        <path d="M0 5h12v12H0z" fill="#107c41" />
        <path d="M3.500 7.500l5 7M8.500 7.500l-5 7" stroke="#ffffff" strokeWidth="1.700" />
      </Drawing>
    </TaskButton>
    <TaskButton label="Paint" open>
      <Drawing w={24} h={24}>
        <path d="M1 15C0 8 7 4 13 5c7 1 10 5 9 9-2 4-5 1-7 4s-4 5-8 4-6-3-6-7z" fill="#c5dff0" />
        <circle cx="5" cy="14" r="2.200" fill="#d8443a" />
        <circle cx="8" cy="9.500" r="2.200" fill="#f0b93a" />
        <circle cx="13.500" cy="8.500" r="2.200" fill="#4bab4f" />
        <circle cx="10.500" cy="15" r="2" fill="#1e1d1c" />
        <path d="M20 4l-7 19" stroke="#d98633" strokeWidth="2" />
        <path d="M18 1l5-1-1 6-4-1z" fill="#c99c72" />
      </Drawing>
    </TaskButton>
    <TaskButton label="Fotos" open>
      <Drawing w={22} h={22}>
        <path d="M0 0h22v22H0z" fill="#29a9ea" />
        <path d="M10 16l7-6 5 5v7H12z" fill="#6f80d2" />
        <path d="M0 13l6-6 14 15H0z" fill="#174c8f" />
        <circle cx="15" cy="5" r="2" fill="#ffffff" />
      </Drawing>
    </TaskButton>
    <div className="ml-auto flex h-full items-center">
      <button type="button" className="flex items-center gap-[11px] text-sm whitespace-pre">
        <span className="h-[18px] w-[18px] rounded-full bg-linear-to-br from-[#ffd21f] to-[#f07800]" />
        16°C  Soleado
      </button>
      <button type="button" aria-label="Iconos ocultos" className="ml-4">
        <Drawing w={12} h={8}><path d="M1 7l5-5 5 5" stroke="#ffffff" strokeWidth="1.300" /></Drawing>
      </button>
      <button type="button" aria-label="Reunirse ahora" className="ml-3">
        <Drawing w={13} h={17}>
          <rect x="1.500" y="4.500" width="7" height="8" rx="1" stroke="#ffffff" strokeWidth="1.200" />
          <path d="M9 7.500l3-2v6l-3-2M3 2c2-1.500 5-1.500 7 0M3 15c2 1.500 5 1.500 7 0" stroke="#ffffff" />
        </Drawing>
      </button>
      <button type="button" aria-label="Red" className="ml-3">
        <Drawing w={13} h={14}>
          <path d="M1 13C1 6 6 2 12 1" stroke="#8a8a8a" />
          <path d="M4 13c0-5 3-8 8-9M7 13c0-3 2-5 5-6M9.500 13c0-1.500 1-2.500 2.500-3" stroke="#ffffff" />
          <circle cx="11" cy="12.500" r="1.500" fill="#ffffff" />
        </Drawing>
      </button>
      <button type="button" aria-label="Volumen" className="ml-2">
        <Drawing w={18} h={14}>
          <path d="M1.500 5v4h2.500l3 3V2L4 5zM9.500 5c1 1 1 3 0 4M12 3c2 2 2 6 0 8M14.500 1.500c3 3 3 8 0 11" stroke="#ffffff" />
        </Drawing>
      </button>
      <button type="button" aria-label="Actualización disponible" className="ml-2">
        <Drawing w={17} h={17}>
          <path d="M12 14.500H1V3l14-2v8M6 4.500l-1 1M11 6c-3-2-6 0-6 3M5 11c2 2 5 1 5-1M11 3.500V6H8.500" stroke="#ffffff" strokeWidth="1.200" />
          <circle cx="13" cy="13" r="3.500" fill="#ff9a1f" />
        </Drawing>
      </button>
      <button type="button" className="ml-[10px] w-5 text-[11px]">ESP</button>
      <div className="ml-3 flex w-[58px] flex-col text-center text-[11px] leading-[18px]">
        <time>11:58</time>
        <time>12/8/2022</time>
      </div>
      <button type="button" aria-label="Notificaciones" className="mr-5 ml-[14px]">
        <Drawing w={17} h={17}>
          <path d="M.5.5h15v12h-5L8 15.500l-2.500-3h-5z" stroke="#ffffff" strokeWidth="1.200" />
        </Drawing>
      </button>
      <span className="mr-1 h-full w-px bg-[#6a6a6a]" />
    </div>
  </footer>
);

const App: React.FC = () => (
  <div className="flex h-screen flex-col overflow-hidden bg-[#e6e6e6] font-['Open_Sans','Noto_Sans',sans-serif] text-xs text-[#262626]">
    <header className="shrink-0 bg-[#217346] text-white">
      <TitleBar />
      <TabBar />
    </header>
    <div className="flex h-[93px] shrink-0 overflow-hidden bg-[#f3f3f3]">
      <ClipboardSection />
      <FontSection />
      <AlignmentSection />
      <NumberSection />
      <StylesSection />
      <CellsSection />
      <EditingSection />
      <button type="button" aria-label="Contraer la cinta" className="mt-auto mr-[10px] mb-[6px] ml-auto">
        <Drawing w={9} h={7}><path d="M1 6l3.500-3.500L8 6" stroke="#666666" strokeWidth="1.800" /></Drawing>
      </button>
    </div>
    <FormulaBar />
    <main className="flex min-h-0 flex-1">
      <Sheet />
      <VerticalScroll />
    </main>
    <SheetTabs />
    <StatusBar />
    <Taskbar />
  </div>
);

export default App;
